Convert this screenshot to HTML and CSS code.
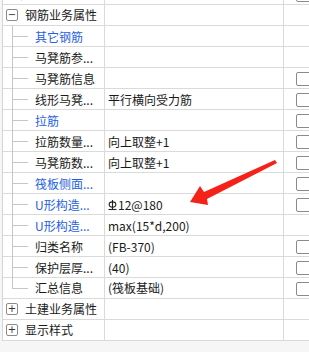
FILE: index.html
```html
<!DOCTYPE html>
<html>
<head>
    <link rel="stylesheet" href="styles.css">
</head>
<body>
    <div class="grid">
        <div class="row">
            <div class="name plain">属性名称</div>
            <div class="value"></div>
            <div class="check"><span class="box"></span></div>
        </div>
        <div class="row">
            <div class="name group"><span class="toggle">−</span>钢筋业务属性</div>
            <div class="value"></div>
            <div class="check"></div>
        </div>
        <div class="row">
            <div class="name child"><span class="branch"></span><span class="label blue">其它钢筋</span></div>
            <div class="value"></div>
            <div class="check"></div>
        </div>
        <div class="row">
            <div class="name child"><span class="branch"></span><span class="label">马凳筋参...</span></div>
            <div class="value"></div>
            <div class="check"></div>
        </div>
        <div class="row">
            <div class="name child"><span class="branch"></span><span class="label">马凳筋信息</span></div>
            <div class="value"></div>
            <div class="check"><span class="box"></span></div>
        </div>
        <div class="row">
            <div class="name child"><span class="branch"></span><span class="label">线形马凳...</span></div>
            <div class="value">平行横向受力筋</div>
            <div class="check"><span class="box"></span></div>
        </div>
        <div class="row">
            <div class="name child"><span class="branch"></span><span class="label blue">拉筋</span></div>
            <div class="value"></div>
            <div class="check"><span class="box"></span></div>
        </div>
        <div class="row">
            <div class="name child"><span class="branch"></span><span class="label">拉筋数量...</span></div>
            <div class="value">向上取整+1</div>
            <div class="check"><span class="box"></span></div>
        </div>
        <div class="row">
            <div class="name child"><span class="branch"></span><span class="label">马凳筋数...</span></div>
            <div class="value">向上取整+1</div>
            <div class="check"><span class="box"></span></div>
        </div>
        <div class="row">
            <div class="name child"><span class="branch"></span><span class="label blue">筏板侧面...</span></div>
            <div class="value"></div>
            <div class="check"><span class="box"></span></div>
        </div>
        <div class="row">
            <div class="name child"><span class="branch"></span><span class="label blue">U形构造...</span></div>
            <div class="value"><svg class="steel" width="9" height="12" viewBox="0 0 9 12"><line x1="4.5" y1="1" x2="4.5" y2="10.5" stroke="#222" stroke-width="1.1"/><ellipse cx="4.5" cy="5.5" rx="3.3" ry="2.6" fill="none" stroke="#222" stroke-width="1.1"/><line x1="0.5" y1="10.5" x2="8.5" y2="10.5" stroke="#222" stroke-width="1.1"/></svg>12@180</div>
            <div class="check"><span class="box"></span></div>
        </div>
        <div class="row">
            <div class="name child"><span class="branch"></span><span class="label blue">U形构造...</span></div>
            <div class="value">max(15*d,200)</div>
            <div class="check"></div>
        </div>
        <div class="row">
            <div class="name child"><span class="branch"></span><span class="label">归类名称</span></div>
            <div class="value">(FB-370)</div>
            <div class="check"><span class="box"></span></div>
        </div>
        <div class="row">
            <div class="name child"><span class="branch"></span><span class="label">保护层厚...</span></div>
            <div class="value">(40)</div>
            <div class="check"><span class="box"></span></div>
        </div>
        <div class="row">
            <div class="name child"><span class="branch last"></span><span class="label">汇总信息</span></div>
            <div class="value">(筏板基础)</div>
            <div class="check"><span class="box"></span></div>
        </div>
        <div class="row">
            <div class="name group"><span class="toggle">+</span>土建业务属性</div>
            <div class="value"></div>
            <div class="check"></div>
        </div>
        <div class="row">
            <div class="name group"><span class="toggle">+</span>显示样式</div>
            <div class="value"></div>
            <div class="check"></div>
        </div>
    </div>

    <!-- 标注箭头 -->
    <svg class="arrow" width="309" height="352" viewBox="0 0 309 352">
        <polygon points="190,202 200,186 204,192 275,160 277,163 207,199 208,205" fill="#f5221a"/>
    </svg>
</body>
</html>
```

FILE: styles.css
```css
body {
    margin: 0;
    background: #f6f6f6;
    font-family: "Noto Sans CJK SC", "Noto Sans", sans-serif;
    font-size: 12px;
    color: #1a1a1a;
    position: relative;
    overflow: hidden;
    height: 352px;
}

.grid {
    margin-top: -16px;
    margin-left: 2px;
    border-left: 1px solid #d6d6d6;
    background: #fff;
}

.row {
    display: grid;
    grid-template-columns: 102px 179px 1fr;
    height: 20px;
    border-bottom: 1px solid #dadada;
}

.name,
.value {
    border-right: 1px solid #dadada;
    line-height: 20px;
    white-space: nowrap;
    overflow: hidden;
}

.name {
    display: flex;
    align-items: center;
}

.name.plain {
    padding-left: 4px;
}

.name.group {
    padding-left: 3px;
}

.name.child {
    padding-left: 9px;
    overflow: visible;
}

.toggle {
    box-sizing: border-box;
    width: 12px;
    height: 12px;
    border: 1px solid #8c8c8c;
    border-radius: 2px;
    margin-right: 7px;
    display: flex;
    justify-content: center;
    align-items: center;
    font-family: "DejaVu Sans", sans-serif;
    font-size: 10px;
    line-height: 1;
    color: #333;
}

.branch {
    align-self: flex-start;
    width: 16px;
    height: 21px;
    margin-right: 7px;
    background:
        linear-gradient(#c6c6c6, #c6c6c6) 0 0 / 1px 100% no-repeat,
        linear-gradient(#c6c6c6, #c6c6c6) 0 10px / 100% 1px no-repeat;
}

.branch.last {
    height: 11px;
}

.label.blue {
    color: #1f5fe0;
}

.value {
    padding-left: 3px;
    display: flex;
    align-items: center;
}

.steel {
    margin-right: 1px;
}

.check {
    padding-left: 12px;
    padding-top: 4px;
}

.box {
    display: block;
    width: 14px;
    height: 12px;
    border: 1px solid #8a8a8a;
    border-radius: 2px;
    background: #fff;
}

.arrow {
    position: absolute;
    left: 0;
    top: 0;
    pointer-events: none;
}
```
